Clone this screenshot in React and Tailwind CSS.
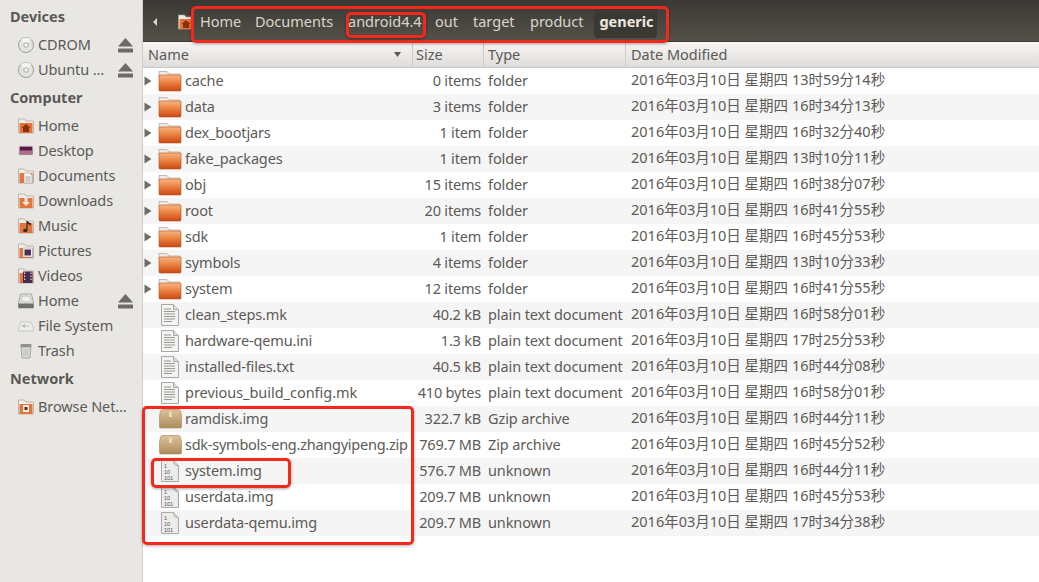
import React from 'react';

const cjk = '"Noto Sans CJK SC"';

const rows = [
  { name: 'cache', size: '0 items', type: 'folder', date: '2016年03月10日 星期四 13时59分14秒', icon: 'folder' },
  { name: 'data', size: '3 items', type: 'folder', date: '2016年03月10日 星期四 16时34分13秒', icon: 'folder' },
  { name: 'dex_bootjars', size: '1 item', type: 'folder', date: '2016年03月10日 星期四 16时32分40秒', icon: 'folder' },
  { name: 'fake_packages', size: '1 item', type: 'folder', date: '2016年03月10日 星期四 13时10分11秒', icon: 'folder' },
  { name: 'obj', size: '15 items', type: 'folder', date: '2016年03月10日 星期四 16时38分07秒', icon: 'folder' },
  { name: 'root', size: '20 items', type: 'folder', date: '2016年03月10日 星期四 16时41分55秒', icon: 'folder' },
  { name: 'sdk', size: '1 item', type: 'folder', date: '2016年03月10日 星期四 16时45分53秒', icon: 'folder' },
  { name: 'symbols', size: '4 items', type: 'folder', date: '2016年03月10日 星期四 13时10分33秒', icon: 'folder' },
  { name: 'system', size: '12 items', type: 'folder', date: '2016年03月10日 星期四 16时41分55秒', icon: 'folder' },
  { name: 'clean_steps.mk', size: '40.2 kB', type: 'plain text document', date: '2016年03月10日 星期四 16时58分01秒', icon: 'text' },
  { name: 'hardware-qemu.ini', size: '1.3 kB', type: 'plain text document', date: '2016年03月10日 星期四 17时25分53秒', icon: 'text' },
  { name: 'installed-files.txt', size: '40.5 kB', type: 'plain text document', date: '2016年03月10日 星期四 16时44分08秒', icon: 'text' },
  { name: 'previous_build_config.mk', size: '410 bytes', type: 'plain text document', date: '2016年03月10日 星期四 16时58分01秒', icon: 'text', track: 'tracking-[-0.03px]' },
  { name: 'ramdisk.img', size: '322.7 kB', type: 'Gzip archive', date: '2016年03月10日 星期四 16时44分11秒', icon: 'archive' },
  { name: 'sdk-symbols-eng.zhangyipeng.zip', size: '769.7 MB', type: 'Zip archive', date: '2016年03月10日 星期四 16时45分52秒', icon: 'archive', track: 'tracking-[-0.25px]' },
  { name: 'system.img', size: '576.7 MB', type: 'unknown', date: '2016年03月10日 星期四 16时44分11秒', icon: 'binary' },
  { name: 'userdata.img', size: '209.7 MB', type: 'unknown', date: '2016年03月10日 星期四 16时45分53秒', icon: 'binary' },
  { name: 'userdata-qemu.img', size: '209.7 MB', type: 'unknown', date: '2016年03月10日 星期四 17时34分38秒', icon: 'binary' },
];

const sidebar = [
  { title: 'Devices', items: [
    { label: 'CDROM', icon: 'disc', eject: true },
    { label: 'Ubuntu …', icon: 'disc', eject: true },
  ] },
  { title: 'Computer', items: [
    { label: 'Home', icon: 'home' },
    { label: 'Desktop', icon: 'desktop' },
    { label: 'Documents', icon: 'docs' },
    { label: 'Downloads', icon: 'downloads' },
    { label: 'Music', icon: 'music' },
    { label: 'Pictures', icon: 'pictures' },
    { label: 'Videos', icon: 'videos' },
    { label: 'Home', icon: 'drive', eject: true },
    { label: 'File System', icon: 'fs' },
    { label: 'Trash', icon: 'trash' },
  ] },
  { title: 'Network', items: [{ label: 'Browse Net…', icon: 'network' }] },
];

const crumbs = [
  { label: 'Home', w: 'w-[55px]' },
  { label: 'Documents', w: 'w-[93px]' },
  { label: 'android4.4', w: 'w-[87px]' },
  { label: 'out', w: 'w-[38px]' },
  { label: 'target', w: 'w-[57px]' },
  { label: 'product', w: 'w-[64px]' },
];

function FolderIcon() {
  return (
    <svg width="24" height="22" viewBox="0 0 24 22" className="shrink-0">
      <defs>
        <linearGradient id="fold" x1="0" y1="0" x2="0" y2="1">
          <stop offset="0" stopColor="#f6b685" />
          <stop offset="0.4" stopColor="#ee8a4a" />
          <stop offset="1" stopColor="#cb4710" />
        </linearGradient>
      </defs>
      <path d="M1 1.500h8l2 2.500h11v3H1z" fill="#efe9e2" stroke="#b9aa9c" strokeWidth="0.8" />
      <rect x="1" y="5" width="22" height="16" rx="1" fill="url(#fold)" stroke="#b9511d" strokeWidth="0.6" />
    </svg>
  );
}

function TextIcon() {
  return (
    <svg width="18" height="22" viewBox="0 0 18 22" className="shrink-0">
      <path d="M0.500 0.500h12l5 5v16h-17z" fill="#f3f3f1" stroke="#a9a9a6" />
      <path d="M12.500 0.500v5h5" fill="#dcdcd9" stroke="#a9a9a6" />
      <path d="M3 5h7M3 7.500h11M3 10h11M3 12.500h11M3 15h11M3 17.500h8" stroke="#8f8f8c" strokeWidth="0.9" />
    </svg>
  );
}

function ArchiveIcon() {
  return (
    <svg width="23" height="20" viewBox="0 0 23 20" className="shrink-0">
      <defs>
        <linearGradient id="box" x1="0" y1="0" x2="0" y2="1">
          <stop offset="0" stopColor="#dcc29a" />
          <stop offset="1" stopColor="#ad8b5d" />
        </linearGradient>
      </defs>
      <path d="M4 0.500h15c1.500 0 2 0.500 2.500 1.500l1 5v10.500c0 1-0.500 1.500-1.500 1.500H2c-1 0-1.500-0.500-1.500-1.500V7l1-5C2 1 2.500 0.500 4 0.500z" fill="url(#box)" stroke="#a5855a" strokeWidth="0.6" />
      <path d="M0.500 7.500h22" stroke="#c9ad84" />
      <rect x="10" y="2.500" width="3" height="5.500" fill="#ead7b8" />
    </svg>
  );
}

function BinaryIcon() {
  return (
    <svg width="18" height="22" viewBox="0 0 18 22" className="shrink-0">
      <path d="M0.500 0.500h12l5 5v16h-17z" fill="#ececea" stroke="#a9a9a6" />
      <path d="M12.500 0.500c0 3 1 5 5 5" fill="#d6d6d3" stroke="#a9a9a6" />
      <text x="3" y="8" fontSize="5.500" fill="#555" fontFamily="Liberation Sans">1</text>
      <text x="3" y="14" fontSize="5.500" fill="#555" fontFamily="Liberation Sans">10</text>
      <text x="3" y="20" fontSize="5.500" fill="#555" fontFamily="Liberation Sans">101</text>
    </svg>
  );
}

function FileIcon({ kind }) {
  if (kind === 'folder') return <FolderIcon />;
  if (kind === 'archive') return <ArchiveIcon />;
  if (kind === 'binary') return <BinaryIcon />;
  return <TextIcon />;
}

function Eject() {
  return (
    <svg width="15" height="16" viewBox="0 0 15 16" className="shrink-0">
      <path d="M7.500 1L15 9.500H0z" fill="#6b6a66" />
      <rect x="0" y="11.500" width="15" height="4" rx="0.500" fill="#6b6a66" />
    </svg>
  );
}

function PlaceIcon({ kind }) {
  const wrap = (inner) => (
    <svg width="16" height="16" viewBox="0 0 16 16" className="shrink-0">{inner}</svg>
  );
  const tab = (
    <>
      <path d="M0.500 1h6l1.500 2h7.500v12h-15z" fill="#f0ece6" stroke="#aaa196" strokeWidth="0.7" />
      <rect x="1.500" y="5" width="13" height="10" fill="#e4743a" />
    </>
  );
  switch (kind) {
    case 'disc':
      return wrap(
        <>
          <circle cx="8" cy="8" r="7.500" fill="#e3e3e1" stroke="#9c9c9a" />
          <path d="M8 8L3 2.500A7 7 0 0 1 13 2.500z" fill="#f4f4f3" />
          <circle cx="8" cy="8" r="2.200" fill="#fafafa" stroke="#a3a3a1" />
        </>
      );
    case 'home':
      return wrap(
        <>
          {tab}
          <path d="M8 6l4.500 4H11v4H5v-4H3.500z" fill="#8e2f0c" />
        </>
      );
    case 'desktop':
      return wrap(
        <>
          <rect x="0.500" y="2.500" width="15" height="10" fill="#fff" stroke="#ccc" strokeWidth="0.5" />
          <rect x="1.500" y="3.500" width="13" height="8" fill="#5b1a45" />
          <path d="M1.500 7.500h13v4h-13z" fill="#a7708e" />
        </>
      );
    case 'docs':
      return wrap(
        <>
          {tab}
          <path d="M6 5h6l2 2v8H6z" fill="#f2f2f0" stroke="#999" strokeWidth="0.5" />
          <path d="M7.500 9h5M7.500 11h5M7.500 13h5" stroke="#888" strokeWidth="0.7" />
        </>
      );
    case 'downloads':
      return wrap(
        <>
          {tab}
          <path d="M6.500 5h3v4h2.500l-4 4-4-4h2.500z" fill="#f1e6da" />
        </>
      );
    case 'music':
      return wrap(
        <>
          {tab}
          <path d="M9 3v9" stroke="#3a2a22" strokeWidth="1.300" />
          <ellipse cx="7.300" cy="12.500" rx="2.200" ry="1.700" fill="#3a2a22" />
          <path d="M9 3l4 2.500v2L9 5.500z" fill="#3a2a22" />
        </>
      );
    case 'pictures':
      return wrap(
        <>
          {tab}
          <rect x="5" y="5" width="9.500" height="9" fill="#f2f2f0" stroke="#999" strokeWidth="0.5" />
          <rect x="6.500" y="6.500" width="6.500" height="6" fill="#4a2f5c" />
        </>
      );
    case 'videos':
      return wrap(
        <>
          {tab}
          <rect x="5" y="3.500" width="9.500" height="11.500" fill="#4b2a52" />
          <path d="M6 4.500h1.200v1.500H6zM6 7.500h1.200V9H6zM6 10.500h1.200V12H6zM12.400 4.500h1.200v1.500h-1.200zM12.400 7.500h1.200V9h-1.200zM12.400 10.500h1.200V12h-1.200z" fill="#ddd" />
        </>
      );
    case 'drive':
      return wrap(
        <>
          <path d="M2.500 1h11l2 9v5h-15v-5z" fill="#dededc" stroke="#8c8c8a" strokeWidth="0.7" />
          <ellipse cx="8" cy="6" rx="4.500" ry="3" fill="#efefed" stroke="#aaa" strokeWidth="0.5" />
          <rect x="0.500" y="10.500" width="15" height="4.500" fill="#6f6f6d" />
        </>
      );
    case 'fs':
      return wrap(
        <>
          <path d="M3 4h10l2.500 6v3h-15v-3z" fill="#ececea" stroke="#b1b1af" strokeWidth="0.6" />
          <path d="M3 8l4-2v4z" fill="#bcbcba" />
          <path d="M6 8h5" stroke="#bcbcba" />
        </>
      );
    case 'trash':
      return wrap(
        <>
          <rect x="2.500" y="1" width="11" height="3" rx="1" fill="#8f8f8b" />
          <path d="M3 4h10l-1 11H4z" fill="#dcdcda" stroke="#8f8f8b" strokeWidth="0.7" />
          <path d="M6 6v7M8 6v7M10 6v7" stroke="#a9a9a6" strokeWidth="0.7" />
        </>
      );
    default:
      return wrap(
        <>
          {tab}
          <rect x="5" y="6" width="6" height="7" fill="#f2ece4" />
          <rect x="6.500" y="8" width="3" height="3" fill="#5a2a12" />
        </>
      );
  }
}

function Sidebar() {
  return (
    <aside className="w-[143px] shrink-0 h-[582px] bg-[#e9e7e4] border-r border-[#d0cdc8] pt-[4px] text-[14.5px] text-[#5c5a56]">
      {sidebar.map((group) => (
        <div key={group.title} className="mb-[3px]">
          <div className="h-[25px] pl-[10px] flex items-center font-bold text-[#5a5955]">{group.title}</div>
          <div className="pt-[3px]">
            {group.items.map((item, i) => (
              <div key={item.label + i} className="h-[25px] flex items-center pl-[18px] pr-[9px] gap-[4px]">
                <PlaceIcon kind={item.icon} />
                <span className="flex-1 whitespace-nowrap tracking-[-0.1px]">{item.label}</span>
                {item.eject && <Eject />}
              </div>
            ))}
          </div>
        </div>
      ))}
    </aside>
  );
}

function Toolbar() {
  return (
    <div className="h-[42px] shrink-0 flex items-center pt-[2px] bg-gradient-to-b from-[#3a3935] to-[#555148] border-b border-[#3a3935] text-[14.5px] text-[#d9d6ce]">
      <svg width="6" height="8" viewBox="0 0 6 8" className="ml-[9px] shrink-0">
        <path d="M5 0v8L1 4z" fill="#d9d6ce" />
      </svg>
      <div className="ml-[20px] mr-[6px] shrink-0">
        <PlaceIcon kind="home" />
      </div>
      <div className="flex items-center">
        {crumbs.map((c) => (
          <span key={c.label} className={c.w + ' whitespace-nowrap shrink-0'}>{c.label}</span>
        ))}
        <span className="mt-[1px] w-[63px] h-[31px] pl-[2px] rounded-[4px] bg-[#3a3833] flex items-center justify-center font-bold text-[#ece9e2]">generic</span>
      </div>
    </div>
  );
}

function Header() {
  return (
    <div className="h-[26px] shrink-0 flex items-stretch bg-gradient-to-b from-[#f7f6f5] to-[#dfdddb] border-b border-[#c9c7c3] text-[14.5px] text-[#5a5955]">
      <div className="w-[270px] flex items-center justify-between pl-[5px] pr-[11px] border-r border-[#cfcdc9]">
        <span>Name</span>
        <svg width="7" height="5" viewBox="0 0 7 5"><path d="M0 0h7L3.500 5z" fill="#5a5955" /></svg>
      </div>
      <div className="w-[71px] flex items-center pl-[3px] border-r border-[#cfcdc9]">Size</div>
      <div className="w-[142px] flex items-center pl-[4px] border-r border-[#cfcdc9]">Type</div>
      <div className="flex-1 flex items-center pl-[5px]">Date Modified</div>
    </div>
  );
}

function Row({ row, index }) {
  return (
    <div className={(index % 2 === 0 ? 'bg-white' : 'bg-[#f5f5f5]') + ' h-[26px] flex items-center text-[14.5px] text-[#5c5a56]'}>
      <div className="w-[269px] shrink-0 flex items-center">
        <div className="w-[9px] shrink-0 flex justify-end">
          {row.icon === 'folder' && (
            <svg width="8" height="10" viewBox="0 0 8 10"><path d="M0.500 0.500l7 4.500-7 4.500z" fill="#6d6c68" /></svg>
          )}
        </div>
        <div className="w-[28px] ml-[4px] mr-[1px] shrink-0 flex justify-center"><FileIcon kind={row.icon} /></div>
        <span className={'whitespace-nowrap ' + (row.track || 'tracking-[-0.15px]')}>{row.name}</span>
      </div>
      <div className="w-[71px] shrink-0 text-right pr-[2px] whitespace-nowrap tracking-[-0.2px]">{row.size}</div>
      <div className="w-[142px] shrink-0 pl-[5px] whitespace-nowrap tracking-[-0.1px]">{row.type}</div>
      <div className="flex-1 pl-[6px] pb-[2px] whitespace-nowrap">{row.date}</div>
    </div>
  );
}

export default function App() {
  return (
    <div className="relative w-[1039px] h-[582px] overflow-hidden flex bg-white" style={{ fontFamily: '"Noto Sans", ' + cjk + ', sans-serif' }}>
      <Sidebar />
      <main className="flex-1 min-w-0 flex flex-col">
        <Toolbar />
        <Header />
        <div>
          {rows.map((row, i) => (
            <Row key={row.name} row={row} index={i} />
          ))}
        </div>
      </main>
      {/* red annotation boxes drawn over the screenshot */}
      <div className="absolute left-[191px] top-[6px] w-[478px] h-[37px] border-[3px] border-[#f4281c] rounded-[5px] shadow-[0_1px_3px_rgba(0,0,0,0.35)]" />
      <div className="absolute left-[346px] top-[12px] w-[80px] h-[26px] border-[3px] border-[#f4281c] rounded-[5px] shadow-[0_1px_3px_rgba(0,0,0,0.35)]" />
      <div className="absolute left-[142px] top-[406px] w-[272px] h-[139px] border-[3px] border-[#f4281c] rounded-[5px] shadow-[0_1px_3px_rgba(0,0,0,0.35)]" />
      <div className="absolute left-[151px] top-[458px] w-[140px] h-[30px] border-[3px] border-[#f4281c] rounded-[5px] shadow-[0_1px_3px_rgba(0,0,0,0.35)]" />
    </div>
  );
}
